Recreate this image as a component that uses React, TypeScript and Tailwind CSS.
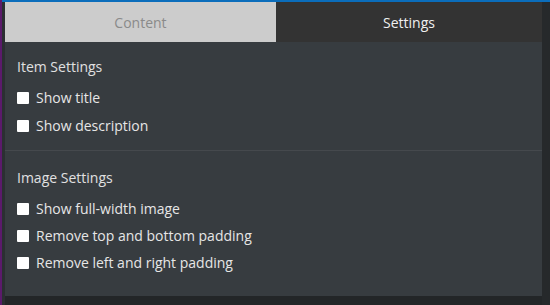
const itemOptions = ["Show title", "Show description"];
const imageOptions = [
  "Show full-width image",
  "Remove top and bottom padding",
  "Remove left and right padding",
];

function Option({ label, spacing }: { label: string; spacing: string }) {
  return (
    <label className={`flex h-5 items-center gap-[7px] ${spacing}`}>
      <span className="h-3 w-3 rounded-[1px] bg-white" />
      <span className="text-[14px] leading-5 text-[#e6e6e6]">{label}</span>
    </label>
  );
}

export default function App() {
  return (
    <div
      className="flex h-[305px] w-[550px] bg-[#232628]"
      style={{ fontFamily: '"Open Sans", "Noto Sans", sans-serif' }}
    >
      <div className="w-[2px] bg-[#5b1a6b]" />
      <div className="flex flex-1 flex-col">
        <div className="h-[2px] bg-[#0b6dbb]" />
        <div className="flex flex-1">
          <div className="w-[3px] bg-[#2b2f32]" />
          <div className="flex w-[537px] flex-col">
            <div className="flex h-10">
              <div className="flex w-[271px] items-center justify-center bg-[#cccccc] text-[14px] text-[#8a8a8a]">
                Content
              </div>
              <div className="flex flex-1 items-center justify-center bg-[#333333] text-[14px] text-[#f0f0f0]">
                Settings
              </div>
            </div>
            <div className="flex h-[254px] flex-col bg-[#373c40]">
              <div className="border-b border-[#45494d] px-3 pb-[14px] pt-[15px]">
                <div className="mb-[11px] text-[14px] leading-5 text-[#e0e0e0]">Item Settings</div>
                {itemOptions.map((o, i) => (
                  <Option key={o} label={o} spacing={i > 0 ? "mt-2" : ""} />
                ))}
              </div>
              <div className="px-3 pt-[17px]">
                <div className="mb-[11px] text-[14px] leading-5 text-[#e0e0e0]">Image Settings</div>
                {imageOptions.map((o, i) => (
                  <Option key={o} label={o} spacing={i > 0 ? "mt-[7px]" : ""} />
                ))}
              </div>
            </div>
          </div>
          <div className="flex-1 bg-[#26292b]" />
        </div>
      </div>
    </div>
  );
}
